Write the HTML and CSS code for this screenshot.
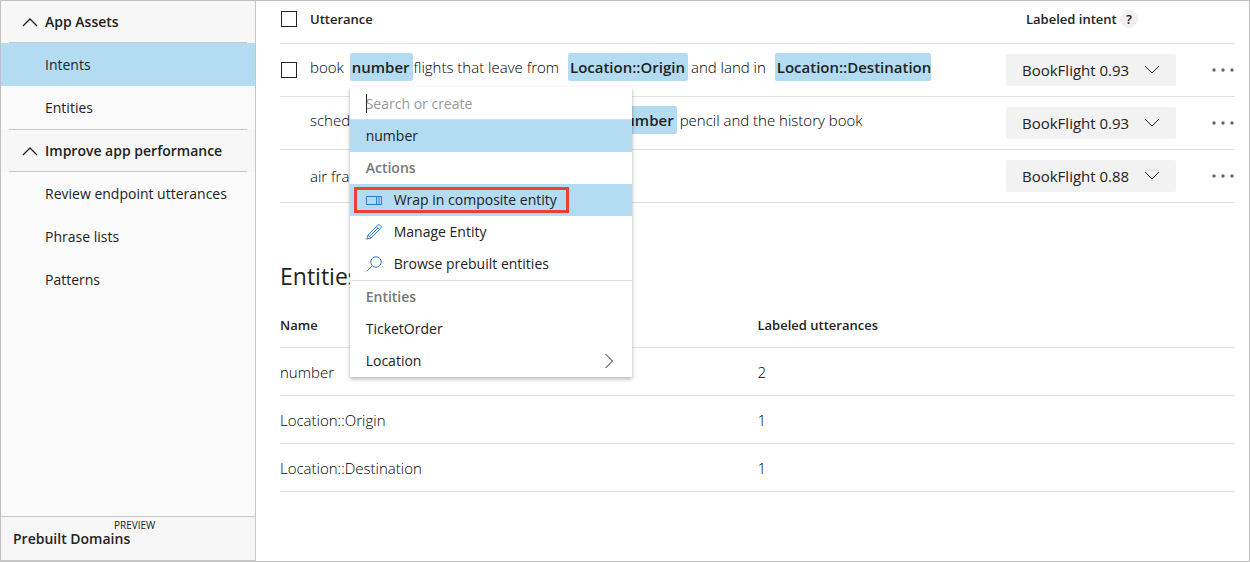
FILE: index.html
```html
<!DOCTYPE html>
<html lang="en">
<head>
<meta charset="utf-8">
<title>Intents</title>
<link rel="stylesheet" href="styles.css">
</head>
<body>
<div class="app">
  <aside class="sidebar">
    <nav class="nav">
      <button class="nav-group" type="button"><svg class="chevron-up" viewBox="0 0 16 10"><path d="M1 9 8 2l7 7"/></svg>App Assets</button>
      <a class="nav-item nav-item-active" href="#intents">Intents</a>
      <a class="nav-item" href="#entities">Entities</a>
      <button class="nav-group nav-group-ruled" type="button"><svg class="chevron-up" viewBox="0 0 16 10"><path d="M1 9 8 2l7 7"/></svg>Improve app performance</button>
      <a class="nav-item" href="#review">Review endpoint utterances</a>
      <a class="nav-item" href="#phrases">Phrase lists</a>
      <a class="nav-item" href="#patterns">Patterns</a>
    </nav>
    <a class="domains" href="#domains"><span class="domains-tag">PREVIEW</span><span class="domains-label">Prebuilt Domains</span></a>
  </aside>

  <main class="content">
    <table class="utterances">
      <colgroup><col class="col-check"><col><col class="col-intent"><col class="col-more"></colgroup>
      <thead>
        <tr>
          <th><input class="check" type="checkbox" aria-label="Select all"></th>
          <th>Utterance</th>
          <th class="intent-head">Labeled intent <button class="help" type="button">?</button></th>
          <th></th>
        </tr>
      </thead>
      <tbody>
        <tr>
          <td><input class="check" type="checkbox" aria-label="Select utterance"></td>
          <td class="utterance tagged">book <span class="anchor"><span class="token">number</span>
            <span class="menu">
              <input class="menu-search" type="text" placeholder="Search or create" aria-label="Search or create">
              <span class="menu-caret"></span>
              <button class="menu-item menu-item-active" type="button">number</button>
              <span class="menu-title">Actions</span>
              <button class="menu-item menu-item-active" type="button"><svg class="menu-icon" viewBox="0 0 16 16"><path d="M.5 4.5h15v8H.5zM10.500 4.500v8M13 4.500v8"/></svg>Wrap in composite entity<span class="callout"></span></button>
              <button class="menu-item" type="button"><svg class="menu-icon" viewBox="0 0 16 16"><path d="M.8 15.200 2 11 11.800 1.300a1.700 1.700 0 0 1 2.500 0l.5.500a1.700 1.700 0 0 1 0 2.400L5 14zM10.500 2.700l3 3M2 11l3 3M3.500 12.500l8.500-8.500"/></svg>Manage Entity</button>
              <button class="menu-item" type="button"><svg class="menu-icon" viewBox="0 0 16 16"><circle cx="10" cy="6" r="5.200"/><path d="M6.300 9.700.6 15.400"/></svg>Browse prebuilt entities</button>
              <span class="menu-title menu-title-ruled">Entities</span>
              <button class="menu-item" type="button">TicketOrder</button>
              <button class="menu-item" type="button">Location<svg class="menu-more" viewBox="0 0 10 16"><path d="m1.500 1 7 7-7 7"/></svg></button>
            </span></span>flights that leave from <span class="token">Location::Origin</span>and land in <span class="token token-last">Location::Destination</span></td>
          <td><span class="picker"><select class="picker-select" aria-label="Labeled intent"><option>BookFlight 0.93</option></select><svg class="picker-arrow" viewBox="0 0 16 9"><path d="m1 1 7 7 7-7"/></svg></span></td>
          <td><button class="more" type="button" aria-label="More"><svg class="dots" viewBox="0 0 24 4"><circle cx="3" cy="2" r="1.700"/><circle cx="12" cy="2" r="1.700"/><circle cx="21" cy="2" r="1.700"/></svg></button></td>
        </tr>
        <tr>
          <td></td>
          <td class="utterance tagged">schedule a meeting to bring along the other <span class="token">number</span>pencil and the history book</td>
          <td><span class="picker"><select class="picker-select" aria-label="Labeled intent"><option>BookFlight 0.93</option></select><svg class="picker-arrow" viewBox="0 0 16 9"><path d="m1 1 7 7 7-7"/></svg></span></td>
          <td><button class="more" type="button" aria-label="More"><svg class="dots" viewBox="0 0 24 4"><circle cx="3" cy="2" r="1.700"/><circle cx="12" cy="2" r="1.700"/><circle cx="21" cy="2" r="1.700"/></svg></button></td>
        </tr>
        <tr>
          <td></td>
          <td class="utterance">air france</td>
          <td><span class="picker"><select class="picker-select" aria-label="Labeled intent"><option>BookFlight 0.88</option></select><svg class="picker-arrow" viewBox="0 0 16 9"><path d="m1 1 7 7 7-7"/></svg></span></td>
          <td><button class="more" type="button" aria-label="More"><svg class="dots" viewBox="0 0 24 4"><circle cx="3" cy="2" r="1.700"/><circle cx="12" cy="2" r="1.700"/><circle cx="21" cy="2" r="1.700"/></svg></button></td>
        </tr>
      </tbody>
    </table>

    <h2 class="heading">Entities</h2>
    <table class="entities">
      <thead><tr><th>Name</th><th>Labeled utterances</th></tr></thead>
      <tbody>
        <tr><td>number</td><td>2</td></tr>
        <tr><td>Location::Origin</td><td>1</td></tr>
        <tr><td>Location::Destination</td><td>1</td></tr>
      </tbody>
    </table>
  </main>
</div>
</body>
</html>
```
FILE: styles.css
```css
* { box-sizing: border-box; }

body {
  margin: 0;
  font: 14px/20px "Open Sans", "Noto Sans", sans-serif;
  color: #222;
}

button, input, select { font: inherit; color: inherit; }
button { border: 0; padding: 0; background: none; text-align: left; }
a { color: inherit; text-decoration: none; }
svg { fill: none; stroke: currentColor; }

.app {
  display: flex;
  min-height: 100vh;
  border: 1px solid #c0c0c0;
  background: #fff;
}

/* Sidebar */
.sidebar {
  flex: 0 0 255px;
  display: flex;
  flex-direction: column;
  justify-content: space-between;
  border-right: 1px solid #c6c6c6;
  background: #fafafa;
}
.nav { display: flex; flex-direction: column; }
.nav-group {
  display: flex;
  align-items: center;
  gap: 7px;
  height: 42px;
  padding: 0 8px 0 21px;
  font-weight: 600;
  background: linear-gradient(#c8c8c8, #c8c8c8) 8px 100% / calc(100% - 16px) 1px no-repeat #f7f7f7;
}
.nav-group-ruled {
  height: 43px;
  background:
    linear-gradient(#c8c8c8, #c8c8c8) 8px 0 / calc(100% - 16px) 1px no-repeat,
    linear-gradient(#c8c8c8, #c8c8c8) 8px 100% / calc(100% - 16px) 1px no-repeat #f7f7f7;
}
.chevron-up { width: 16px; height: 10px; stroke-width: 1.3; }
.nav-item { padding: 12px 8px 11px 44px; }
.nav-item-active { background: #b3dcf2; }
.domains {
  display: flex;
  flex-direction: column;
  padding: 3px 12px 12px;
  border-top: 1px solid #c8c8c8;
  border-bottom: 1px solid #c8c8c8;
  background: #f6f6f6;
}
.domains-tag {
  padding-left: 101px;
  font-size: 10px;
  line-height: 10px;
}
.domains-label { line-height: 18px; font-weight: 600; }

/* Tables */
.content { flex: 1; min-width: 0; padding: 0 14px 24px 24px; }
table { width: 100%; border-collapse: collapse; table-layout: fixed; }
th, td { padding: 0; text-align: left; border-bottom: 1px solid #e2e2e2; }
th { font-size: 13px; font-weight: 600; }
td { font-size: 15px; }
.utterances th { height: 42px; padding-bottom: 5px; }
.utterances td { height: 53px; }
.col-check { width: 30px; }
.col-intent { width: 205px; }
.col-more { width: 24px; }
.utterances .intent-head { padding-left: 20px; }

.check {
  appearance: none;
  display: block;
  width: 16px;
  height: 16px;
  margin: 0 1px;
  border: 1px solid #222;
  background: #fff;
}
.help {
  width: 18px;
  height: 18px;
  border-radius: 50%;
  background: #f0f0f0;
  text-align: center;
  line-height: 18px;
}

.utterance { color: #000; font-weight: 300; white-space: nowrap; }
.utterances .tagged { padding-bottom: 6px; }
.anchor { position: relative; display: inline-block; margin-left: 2px; color: #222; }
.token {
  display: inline-block;
  padding: 4px 3px 4px 2px;
  margin: 0 3px 0 5px;
  border-radius: 2px;
  background: #b3dcf2;
  color: #222;
  font-weight: 600;
}
.anchor .token { margin: 0 1px 0 0; }
.token-last { padding-right: 0; }

.picker { display: grid; align-items: center; width: 170px; }
.picker-select {
  grid-area: 1 / 1;
  appearance: none;
  height: 32px;
  padding: 0 40px 0 16px;
  border: 0;
  border-radius: 2px;
  background: #f2f2f2;
}
.picker-arrow {
  grid-area: 1 / 1;
  justify-self: end;
  width: 16px;
  height: 9px;
  margin-right: 16px;
  pointer-events: none;
}
.more { display: block; }
.dots { display: block; width: 24px; height: 4px; fill: #666; stroke: none; }

.heading { margin: 57px 0 0; font-size: 23px; line-height: 32px; font-weight: 400; }
.entities th { height: 56px; padding-bottom: 12px; vertical-align: bottom; }
.entities td { height: 48px; color: #000; font-weight: 300; }

/* Entity menu */
.menu {
  position: absolute;
  z-index: 1;
  left: 0;
  top: 34px;
  width: 282px;
  display: flex;
  flex-direction: column;
  background: #fff;
  box-shadow: 0 2px 4px rgba(0, 0, 0, .3);
  font-size: 14px;
  font-weight: 400;
}
.menu-search {
  height: 33px;
  padding: 1px 16px 0;
  border: 0;
  border-bottom: 1px solid #dcdcdc;
  background: transparent;
}
.menu-search::placeholder { color: #999; opacity: 1; }
.menu-caret {
  position: absolute;
  left: 16px;
  top: 7px;
  width: 1px;
  height: 19px;
  background: #222;
}
.menu-item {
  position: relative;
  display: flex;
  align-items: center;
  height: 32px;
  padding: 0 16px;
}
.menu-item-active { background: #b3dcf2; }
.menu-title { padding: 6px 16px; color: #777; font-size: 14px; font-weight: 600; }
.menu-title-ruled { border-top: 1px solid #dcdcdc; }
.menu-icon { width: 16px; height: 16px; margin-right: 12px; stroke: #2b7cd3; }
.menu-more { width: 10px; height: 16px; margin-left: auto; margin-right: 2px; }
.callout {
  position: absolute;
  inset: 3px 63px 3px 4px;
  border: 3px solid #ee4030;
}
```
